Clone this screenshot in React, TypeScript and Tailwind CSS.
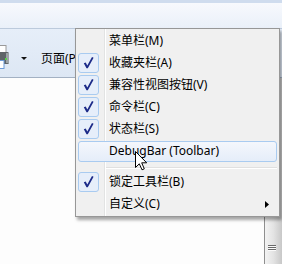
import React from "react";

const Check = () => (
  <svg width="21" height="20" viewBox="0 0 21 20" className="block">
    <path d="M5.8 10.2 L7.7 9.4 L9.3 12.4 L14 4 L15.6 4.8 L9.8 15.3 L8.5 15.3 Z" fill="#1c2a88" />
  </svg>
);

type Item = { label: string; checked?: boolean; hover?: boolean; sub?: boolean };

const top: Item[] = [
  { label: "菜单栏(M)" },
  { label: "收藏夹栏(A)", checked: true },
  { label: "兼容性视图按钮(V)", checked: true },
  { label: "命令栏(C)", checked: true },
  { label: "状态栏(S)", checked: true },
  { label: "DebugBar (Toolbar)", hover: true },
];
const bottom: Item[] = [
  { label: "锁定工具栏(B)", checked: true },
  { label: "自定义(C)", sub: true },
];

function Row({ it }: { it: Item }) {
  return (
    <div className="relative h-[22px] flex items-center">
      {it.hover && (
        <div className="absolute left-0 right-0 top-px bottom-0 rounded-[3px] border border-[#a9cbf0] bg-gradient-to-b from-[#f4f7fc] to-[#e5edf9]" />
      )}
      <div className="relative w-[21px] h-[20px] shrink-0">
        {it.checked && (
          <div className="w-[21px] h-[20px] rounded-[3px] border border-[#a9cbf0] bg-[#e6eefa]">
            <div className="-m-px">
              <Check />
            </div>
          </div>
        )}
      </div>
      <span className="relative ml-[10px] text-[12px] leading-[22px] text-black whitespace-nowrap">
        {it.label}
      </span>
      {it.sub && (
        <svg className="absolute right-[8px] top-[8px]" width="4" height="7" viewBox="0 0 4 7">
          <path d="M0 0 L4 3.5 L0 7 Z" fill="#000" />
        </svg>
      )}
    </div>
  );
}

export default function App() {
  return (
    <div
      className="relative w-[282px] h-[264px] overflow-hidden bg-white"
      style={{ fontFamily: '"Noto Sans", "Noto Sans CJK SC", sans-serif' }}
    >
      <div className="h-[3px] bg-[#cfdcee]" />
      <div className="h-[25px] bg-gradient-to-b from-[#f7f9fd] to-[#eaf0f9]" />
      <div className="h-px bg-[#bccadc]" />
      <div className="h-[48px] flex items-start bg-gradient-to-b from-[#e6eef9] to-[#dde7f4]">
        <svg className="mt-[16px] shrink-0" width="10" height="25" viewBox="0 0 10 25">
          <rect x="-3" y="0.5" width="9" height="8" fill="#fff" stroke="#9a9a9a" />
          <rect x="-3" y="7" width="12" height="12" rx="1.5" fill="#5f6468" />
          <rect x="6" y="8" width="3" height="10" fill="#9ca2a6" />
          <rect x="5" y="13" width="2" height="2" fill="#58d24a" />
          <rect x="-3" y="15.5" width="7" height="8" fill="#fff" stroke="#6d9bd8" />
        </svg>
        <svg className="ml-[11px] mt-[28px] shrink-0" width="6" height="3" viewBox="0 0 6 3">
          <path d="M0 0 L6 0 L3 3 Z" fill="#111" />
        </svg>
        <span className="ml-[14px] mt-[22px] text-[12px] leading-[16px] text-black whitespace-nowrap">
          页面(P)
        </span>
      </div>
      <div className="h-px bg-[#a3b1c3]" />
      <div className="flex h-[186px]">
        <div className="flex-1 bg-[#fdfdfd]" />
        <div className="relative w-[18px] border-l border-[#8f8f8f] bg-gradient-to-r from-[#f3f3f3] via-[#e3e3e3] to-[#c8c8c8]">
          <div className="absolute left-[3px] top-[167px] w-[8px] flex flex-col">
            <div className="h-px bg-[#6a6a6a]" />
            <div className="h-px bg-[#fafafa]" />
            <div className="h-px bg-[#6a6a6a]" />
            <div className="h-px bg-[#fafafa]" />
            <div className="h-px bg-[#6a6a6a]" />
            <div className="h-px bg-[#fafafa]" />
          </div>
        </div>
      </div>

      <div className="absolute left-[75px] top-[28px] w-[205px] border border-[#979797] bg-[#f0f0f0] px-[2px] py-px shadow-[2px_3px_3px_rgba(0,0,0,0.35)]">
        <div className="absolute left-[28px] top-0 bottom-0 w-px bg-[#e2e3e3]" />
        <div className="absolute left-[29px] top-0 bottom-0 w-px bg-white" />
        {top.map((it) => (
          <Row key={it.label} it={it} />
        ))}
        <div className="h-[9px] pt-[5px] pl-[27px]">
          <div className="h-px bg-[#e0e0e0]" />
          <div className="h-px bg-white" />
        </div>
        {bottom.map((it) => (
          <Row key={it.label} it={it} />
        ))}
      </div>

      <svg className="absolute left-[135px] top-[151px]" width="13" height="20" viewBox="0 0 13 20">
        <path
          d="M0.5 0.5 L0.5 16.5 L4.3 12.8 L7 18.8 L9.3 17.8 L6.7 11.8 L11.7 11.8 Z"
          fill="#fff"
          stroke="#000"
          strokeWidth="1"
          strokeLinejoin="miter"
        />
      </svg>
    </div>
  );
}
